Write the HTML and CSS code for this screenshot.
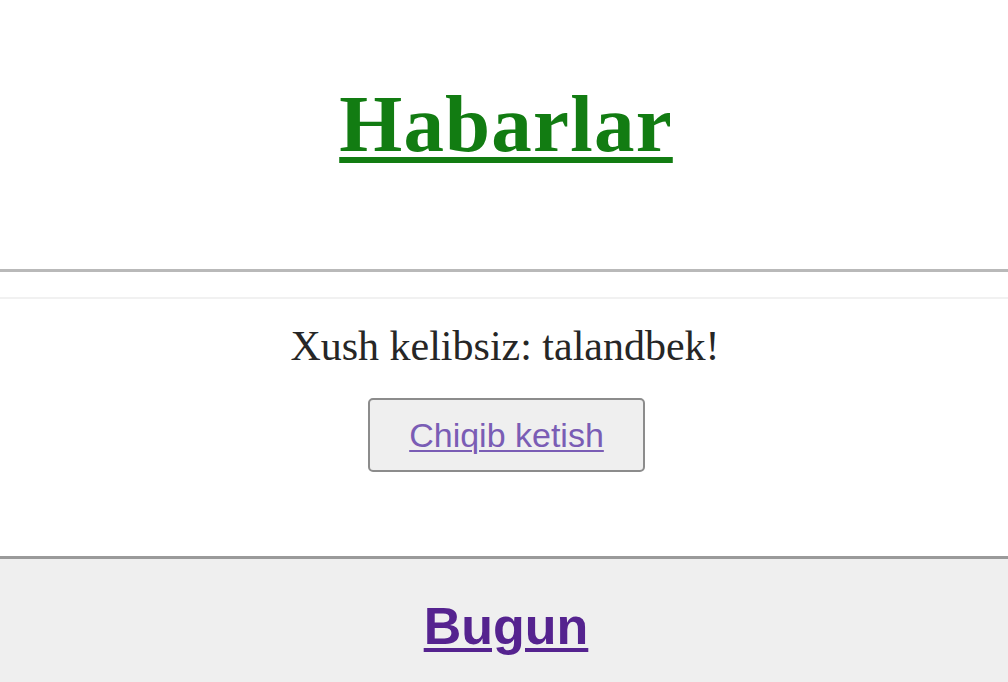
FILE: index.html
```html
<!DOCTYPE html>
<html lang="uz">
<head>
<meta charset="utf-8">
<title>Habarlar</title>
<link rel="stylesheet" href="styles.css">
</head>
<body>
<header class="header">
  <h1 class="title"><a href="#" class="title-link">Habarlar</a></h1>
</header>
<div class="rule-main"></div>
<section class="user">
  <p class="welcome">Xush kelibsiz: talandbek!</p>
  <button class="logout" type="button"><a href="#" class="logout-link">Chiqib ketish</a></button>
</section>
<section class="news">
  <h2 class="news-title"><a href="#" class="news-link">Bugun</a></h2>
</section>
</body>
</html>
```
FILE: styles.css
```css
html, body {
  margin: 0;
  padding: 0;
  background: #ffffff;
}
body {
  font-family: "Liberation Serif", "Times New Roman", serif;
  overflow: hidden;
}
.header {
  display: flex;
  justify-content: center;
  padding-top: 84px;
  padding-left: 4px;
  height: 185px;
  box-sizing: border-box;
  height: 269px;
}
.title {
  margin: 0;
  font-size: 81px;
  line-height: 81px;
  font-weight: bold;
  letter-spacing: 1.2px;
}
.title-link {
  color: #127c12;
  text-decoration: underline;
  text-decoration-thickness: 6px;
  text-underline-offset: 6px;
}
.rule-main {
  border-top: 3px solid #b9b9b9;
  height: 25px;
}
.user {
  border-top: 2px solid #f1f1f1;
  display: flex;
  flex-direction: column;
  align-items: center;
  padding-top: 26px;
  padding-bottom: 84px;
}
.welcome {
  margin: 0;
  padding-left: 2px;
  font-size: 42px;
  line-height: 42px;
  color: #262626;
}
.logout {
  margin-top: 31px;
  margin-left: 5px;
  width: 277px;
  height: 74px;
  box-sizing: border-box;
  border: 2px solid #8c8c8c;
  border-radius: 5px;
  background: #efefef;
  display: flex;
  align-items: center;
  justify-content: center;
  padding: 0;
  font-family: "Liberation Sans", Arial, sans-serif;
  font-size: 34px;
}
.logout-link {
  color: #7a5db5;
  text-decoration: underline;
  text-decoration-thickness: 2px;
  text-underline-offset: 3px;
}
.news {
  border-top: 3px solid #9a9a9a;
  background: #efefef;
  height: 82px;
  display: flex;
  justify-content: center;
  padding-top: 41px;
  padding-left: 4px;
}
.news-title {
  margin: 0;
  font-family: "Liberation Sans", Arial, sans-serif;
  font-size: 52px;
  line-height: 52px;
  font-weight: bold;
}
.news-link {
  color: #55238f;
  text-decoration: underline;
  text-decoration-thickness: 4px;
  text-underline-offset: 4px;
}
```
